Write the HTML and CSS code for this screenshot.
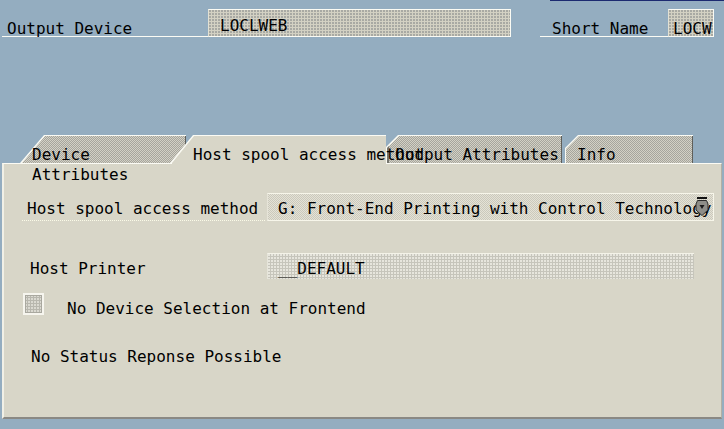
FILE: index.html
```html
<!DOCTYPE html>
<html>
<head>
<meta charset="utf-8">
<link rel="stylesheet" href="styles.css">
</head>
<body>
<div class="screen">
  <div class="toprow">
    <div class="tlabel lbl-out">Output Device</div>
    <div class="tfield fld-out">LOCLWEB</div>
    <div class="tlabel lbl-short">Short Name</div>
    <div class="tfield fld-short">LOCW</div>
  </div>
  <div class="tabs">
    <div class="tab tab-device"><span class="tab-text">Device<br>Attributes</span></div>
    <div class="tab tab-host"><span class="tab-text">Host spool access method</span></div>
    <div class="tab tab-output"><span class="tab-text">Output Attributes</span></div>
    <div class="tab tab-info"><span class="tab-text">Info</span></div>
  </div>
  <div class="panel">
    <div class="row row-method">
      <div class="plabel lbl-method">Host spool access method</div>
      <div class="pfield fld-method">G: Front-End Printing with Control Technology<svg class="dd" width="14" height="20" viewBox="0 0 14 20"><rect x="2" y="0" width="10" height="2" fill="#111"/><path d="M2.5 3.5h9l1.5 3.5v6l-6 5.5-6-5.5V7z" fill="#8e8d88" stroke="#2a2a2a" stroke-width="1"/><path d="M4.5 8h5l-2.5 4z" fill="#1a1a1a"/></svg></div>
    </div>
    <div class="row row-printer">
      <div class="plabel lbl-printer">Host Printer</div>
      <div class="pfield fld-printer">__DEFAULT</div>
    </div>
    <div class="row row-check">
      <span class="checkbox"></span>
      <span class="check-text">No Device Selection at Frontend</span>
    </div>
    <div class="status">No Status Reponse Possible</div>
  </div>
</div>
</body>
</html>
```
FILE: styles.css
```css
* { box-sizing: border-box; }
html, body { margin: 0; padding: 0; }
body {
  width: 724px;
  height: 429px;
  overflow: hidden;
  background:
    linear-gradient(#1c2a70, #1c2a70) no-repeat 550px 0 / 174px 1px,
    #94adc0;
  font-family: "DejaVu Sans Mono", "Liberation Mono", monospace;
  font-size: 16px;
  line-height: 20px;
  color: #000;
}
.screen { width: 724px; }

/* top row */
.toprow {
  display: flex;
  padding-top: 9px;
  height: 37px;
}
.tlabel {
  height: 28px;
  border-bottom: 1px solid #fbfbf4;
  padding-top: 10px;
  white-space: nowrap;
}
.lbl-out { margin-left: 2px; width: 206px; padding-left: 5px; }
.lbl-short { margin-left: 29px; width: 128px; padding-left: 12px; }
.tfield {
  height: 28px;
  border: 1px solid #fbfbf4;
  border-left-color: #e2e1d4;
  background:
    radial-gradient(circle at 1px 1px, #a7a8a2 0.7px, transparent 0.9px) 0 0 / 3px 3px,
    #d3d1c3;
  white-space: nowrap;
  overflow: hidden;
}
.fld-out { width: 303px; padding: 6px 0 0 11px; }
.fld-short { width: 46px; padding: 9px 0 0 4px; }

/* tabs */
.tabs {
  display: flex;
  align-items: flex-start;
  height: 28px;
  margin-top: 98px;
}
.tab {
  position: relative;
  height: 28px;
  flex: none;
}
.tab::before, .tab::after {
  content: "";
  position: absolute;
  left: 0; top: 0; right: 0; bottom: 0;
}
.tab::before { background: #fbfbf4; clip-path: var(--outer); }
.tab::after {
  background:
    linear-gradient(to left, #5f5f5a 0 1px, transparent 1px),
    repeating-conic-gradient(#d3d1c5 0 25%, #a6a59d 0 50%) 0 0 / 2px 2px;
  clip-path: var(--inner);
}
.tab-text {
  position: relative;
  z-index: 3;
  display: block;
  padding-top: 10px;
  white-space: nowrap;
}
.tab-device {
  margin-left: 20px;
  width: 166px;
  --outer: polygon(0 28px, 24px 0, 166px 0, 166px 28px);
  --inner: polygon(2px 28px, 25px 1px, 166px 1px, 166px 28px);
}
.tab-device .tab-text { padding-left: 12px; }
.tab-host {
  margin-left: -16px;
  width: 216px;
  height: 29px;
  z-index: 2;
  --outer: polygon(0 28px, 23px 0, 216px 0, 216px 29px, 0 29px);
  --inner: polygon(2px 28px, 24px 1px, 216px 1px, 216px 29px, 2px 29px);
}
.tab-host::after { background: #d8d6c8; }
.tab-host .tab-text { padding-left: 23px; }
.tab-output {
  width: 176px;
  --outer: polygon(0 28px, 0 12px, 12px 0, 176px 0, 176px 28px);
  --inner: polygon(1px 28px, 1px 13px, 13px 1px, 176px 1px, 176px 28px);
}
.tab-output::after {
  background:
    linear-gradient(to left, #5f5f5a 0 1px, transparent 1px),
    linear-gradient(to right, #76756e 0 3px, transparent 3px),
    repeating-conic-gradient(#d3d1c5 0 25%, #a6a59d 0 50%) 0 0 / 2px 2px;
}
.tab-output .tab-text { padding-left: 9px; }
.tab-info {
  margin-left: 3px;
  width: 128px;
  --outer: polygon(0 28px, 0 13px, 13px 0, 128px 0, 128px 28px);
  --inner: polygon(1px 28px, 1px 14px, 14px 1px, 128px 1px, 128px 28px);
}
.tab-info .tab-text { padding-left: 12px; }

/* panel */
.panel {
  position: relative;
  z-index: 1;
  margin-left: 2px;
  width: 720px;
  height: 256px;
  background: #d8d6c8;
  border-top: 1px solid #fbfbf4;
  border-left: 2px solid #f1f0e6;
  border-right: 1px solid #b2b0a4;
  border-bottom: 2px solid #8a8984;
}
.row { display: flex; }
.plabel { white-space: nowrap; padding-top: 6px; }
.pfield {
  position: relative;
  white-space: nowrap;
  overflow: hidden;
  padding-top: 5px;
}
.row-method { margin-top: 29px; height: 28px; }
.lbl-method {
  margin-left: 18px;
  width: 243px;
  height: 28px;
  padding-left: 5px;
  border-bottom: 1px dotted #fbfbe8;
}
.fld-method {
  margin-left: 2px;
  width: 447px;
  height: 28px;
  padding-left: 10px;
  border: 1px solid #f7f6ea;
  border-left-color: #e6e4d8;
  background: repeating-conic-gradient(#e4e2d6 0 25%, #cbc9bc 0 50%) 0 0 / 2px 2px;
}
.dd { position: absolute; left: 427px; top: 3px; }
.row-printer { margin-top: 32px; height: 26px; }
.lbl-printer { margin-left: 26px; width: 237px; }
.fld-printer {
  width: 427px;
  height: 26px;
  padding-left: 10px;
  border-top: 1px solid #f4f3e8;
  border-left: 1px solid #e6e5da;
  background:
    radial-gradient(circle at 1px 1px, #e8e7de 0.7px, transparent 0.9px) 0 0 / 3px 3px,
    #c6c5bb;
}
.row-check { margin-top: 14px; height: 22px; }
.checkbox {
  margin-left: 19px;
  width: 21px;
  height: 22px;
  border: 2px solid #f6f5ee;
  background:
    radial-gradient(circle at 1px 1px, #dcdbd2 0.7px, transparent 0.9px) 0 0 / 3px 3px,
    #b8b7ae;
  box-shadow: inset 0 0 0 1px #a9a89f;
}
.check-text { margin-left: 23px; padding-top: 6px; white-space: nowrap; }
.status { margin-top: 32px; margin-left: 27px; white-space: nowrap; }
```
